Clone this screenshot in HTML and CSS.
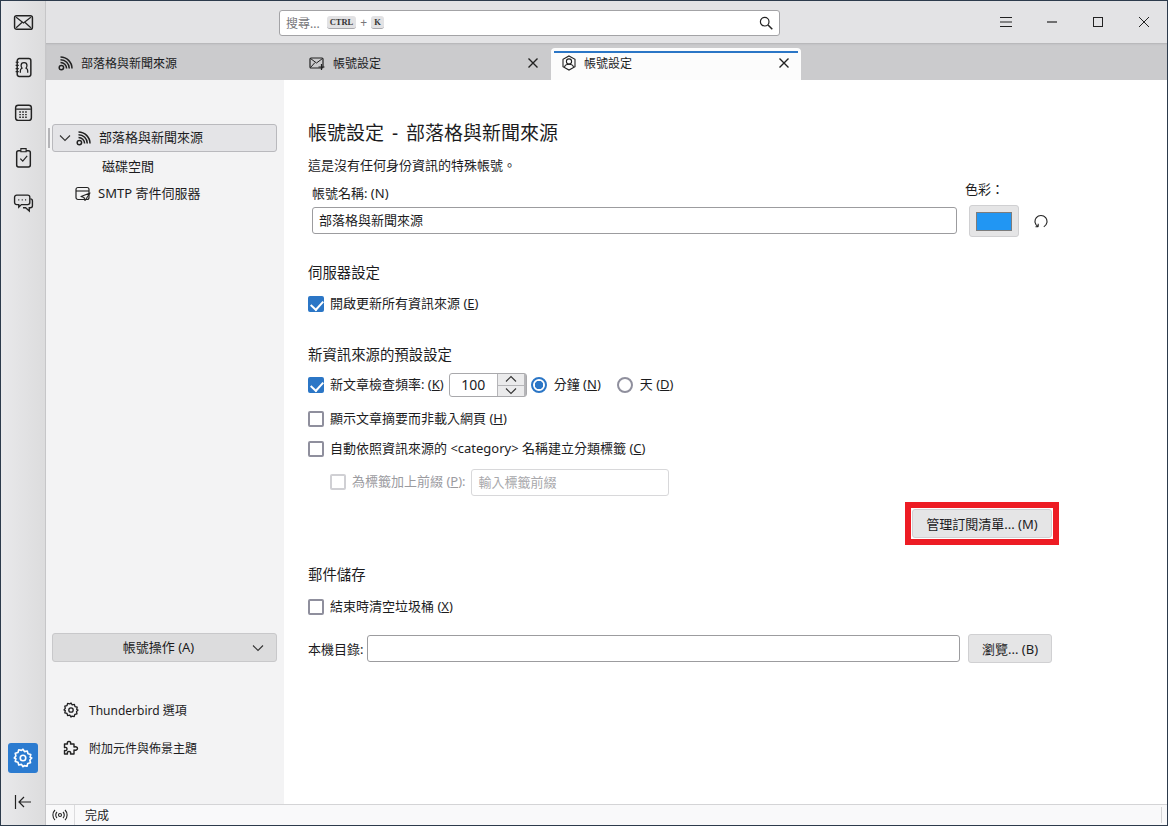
FILE: index.html
```html
<!DOCTYPE html>
<html lang="zh-Hant">
<head>
  <meta charset="UTF-8" />
  <title>帳號設定</title>
  <link rel="stylesheet" href="styles.css">
</head>
<body>
  <svg class="defs" width="0" height="0">
    <symbol id="i-rss" viewBox="0 0 16 16">
      <circle cx="3.4" cy="12.6" r="2.2" fill="none" stroke="#222" stroke-width="1.5"/>
      <g fill="none" stroke="#222" stroke-width="1.5">
        <path d="M2.500 7.400a6.100 6.100 0 0 1 6.100 6.100"/>
        <path d="M2.500 4.700a8.800 8.800 0 0 1 8.800 8.800"/>
        <path d="M2.500 2a11.500 11.500 0 0 1 11.500 11.500"/>
      </g>
    </symbol>
    <symbol id="i-gear" viewBox="0 0 16 16">
      <path d="M8 1l1.2 1.9 2.2-.5.6 2.2 2.2.6-.5 2.2L15 8l-1.5 1.6.5 2.2-2.2.6-.6 2.2-2.2-.5L8 15l-1.2-1.9-2.2.5-.6-2.2-2.2-.6.5-2.2L1 8l1.3-1.6-.5-2.2 2.2-.6.6-2.2 2.2.5z" fill="none" stroke="currentColor" stroke-width="1.3" stroke-linejoin="round"/>
      <circle cx="8" cy="8" r="2.2" fill="none" stroke="currentColor" stroke-width="1.3"/>
    </symbol>
    <symbol id="i-x" viewBox="0 0 12 12">
      <path d="M1.500 1.500l9 9M10.500 1.500l-9 9" stroke="#222" stroke-width="1.4" fill="none"/>
    </symbol>
    <symbol id="i-down" viewBox="0 0 12 8">
      <path d="M1 1.500l5 5 5-5" stroke="#333" stroke-width="1.1" fill="none"/>
    </symbol>
  </svg>

  <div class="app">
    <nav class="rail">
      <div class="rail-top">
        <svg class="rail-ico" viewBox="0 0 20 20"><rect x="1.500" y="3.500" width="17" height="13" rx="2" fill="none" stroke="#222" stroke-width="1.400"/><path d="M3 5l7 5.500L17 5M3 15l5.500-5M17 15l-5.500-5" fill="none" stroke="#222" stroke-width="1.100"/></svg>
        <svg class="rail-ico" viewBox="0 0 20 20"><rect x="4" y="1.500" width="13" height="17" rx="2" fill="none" stroke="#222" stroke-width="1.400"/><path d="M2.500 5h3M2.500 8h3M2.500 11h3M2.500 14h3" stroke="#222" stroke-width="1.100"/><path d="M7 15v-2c0-1.500 1-2 1.600-2.400C7.800 9.500 7.700 8.700 7.700 8c0-1.500 1-2.600 2.800-2.600s2.800 1.100 2.800 2.600c0 .7-.1 1.500-.9 2.600.6.4 1.600.9 1.600 2.400v2" fill="none" stroke="#222" stroke-width="1.200"/></svg>
        <svg class="rail-ico" viewBox="0 0 20 20"><rect x="2.500" y="3" width="15" height="14.500" rx="2.500" fill="none" stroke="#222" stroke-width="1.400"/><path d="M3 6.800h14" stroke="#222" stroke-width="1.200"/><path d="M6 9.500h8M6 12h8M6 14.500h8" stroke="#222" stroke-width="1.300" stroke-dasharray="1.500 1.300"/></svg>
        <svg class="rail-ico" viewBox="0 0 20 20"><rect x="3.500" y="3.500" width="13" height="15.500" rx="1.800" fill="none" stroke="#222" stroke-width="1.400"/><path d="M7.500 1.500h5v3h-5z" fill="#e4e4e4" stroke="#222" stroke-width="1.100"/><path d="M7 11l2.300 2.500L13.500 8.500" fill="none" stroke="#222" stroke-width="1.100"/></svg>
        <svg class="rail-ico" viewBox="0 0 20 20"><path d="M3.500 3h10.500a2 2 0 0 1 2 2v5a2 2 0 0 1-2 2H8l-2.500 2.500V12H3.500a2 2 0 0 1-2-2V5a2 2 0 0 1 2-2z" fill="none" stroke="#222" stroke-width="1.300"/><path d="M16.500 6.500a2 2 0 0 1 2 2V13a2 2 0 0 1-2 2h-1v3l-3.500-3H9.500" fill="none" stroke="#222" stroke-width="1.300"/><path d="M5 7.500h1M8.300 7.500h1M11.500 7.500h1" stroke="#222" stroke-width="1.300"/></svg>
      </div>
      <div class="rail-bottom">
        <div class="rail-settings"><svg class="ico-18"><use href="#i-gear"/></svg></div>
        <svg class="rail-collapse" viewBox="0 0 18 14"><path d="M1.500 0v14M17 7H5M10 2L5 7l5 5" fill="none" stroke="#222" stroke-width="1.200"/></svg>
      </div>
    </nav>

    <div class="main">
      <header class="toolbar">
        <div class="search">
          <span class="search-hint">搜尋...</span>
          <kbd class="key">CTRL</kbd>
          <span class="plus">+</span>
          <kbd class="key">K</kbd>
          <svg class="search-ico" viewBox="0 0 14 14"><circle cx="5.700" cy="5.700" r="4.300" fill="none" stroke="#222" stroke-width="1.200"/><path d="M9 9l4.300 4.300" stroke="#222" stroke-width="1.500"/></svg>
        </div>
        <div class="win-btns">
          <svg class="win-ico" viewBox="0 0 12 12"><path d="M0 1.500h12M0 6h12M0 10.500h12" stroke="#222" stroke-width="1"/></svg>
          <svg class="win-ico" viewBox="0 0 12 12"><path d="M1 6h10" stroke="#222" stroke-width="1.200"/></svg>
          <svg class="win-ico" viewBox="0 0 12 12"><rect x="1.500" y="1.500" width="9" height="9" fill="none" stroke="#222" stroke-width="1"/></svg>
          <svg class="win-ico" viewBox="0 0 12 12"><path d="M1 1l10 10M11 1L1 11" stroke="#222" stroke-width="1"/></svg>
        </div>
      </header>

      <div class="tabbar">
        <div class="tab tab-first">
          <svg class="ico-16"><use href="#i-rss"/></svg>
          <span>部落格與新聞來源</span>
        </div>
        <div class="tab tab-second">
          <svg class="ico-16" viewBox="0 0 16 16"><rect x="1" y="3" width="13" height="10" rx="1" fill="none" stroke="#222" stroke-width="1.200"/><path d="M1.500 3.500L7.500 8l6-4.500M1.500 12.500L6 7.500" fill="none" stroke="#222" stroke-width="1"/><path d="M12.500 9v6M9.500 12h6" stroke="#222" stroke-width="1.200"/></svg>
          <span class="tab-label">帳號設定</span>
          <svg class="tab-close"><use href="#i-x"/></svg>
        </div>
        <div class="tab tab-active">
          <svg class="ico-16" viewBox="0 0 16 16"><path d="M8 1l6 3.300v7.400L8 15l-6-3.300V4.300z" fill="none" stroke="#222" stroke-width="1.100"/><circle cx="8" cy="6.500" r="2.600" fill="none" stroke="#222" stroke-width="1.100"/><path d="M3.500 12c.5-2 2-2.800 4.500-2.800s4 .8 4.500 2.800" fill="none" stroke="#222" stroke-width="1.100"/></svg>
          <span class="tab-label">帳號設定</span>
          <svg class="tab-close"><use href="#i-x"/></svg>
        </div>
      </div>

      <div class="body">
        <aside class="sidebar">
          <div class="tree-row">
            <svg class="tree-arrow"><use href="#i-down"/></svg>
            <svg class="ico-16"><use href="#i-rss"/></svg>
            <span class="txt">部落格與新聞來源</span>
          </div>
          <div class="tree-child">磁碟空間</div>
          <div class="tree-smtp">
            <svg class="ico-16" viewBox="0 0 16 16"><rect x="1" y="1.500" width="13" height="12" rx="2" fill="none" stroke="#222" stroke-width="1.200"/><path d="M1 5h13" stroke="#222" stroke-width="1.100"/><path d="M15 7L6 10.500l3 1 1 3z" fill="#f3f3f3" stroke="#222" stroke-width="1.100" stroke-linejoin="round"/></svg>
            <span class="txt">SMTP 寄件伺服器</span>
          </div>
          <div class="side-spacer"></div>
          <button class="btn action-btn">
            <span>帳號操作 (A)</span>
            <svg class="action-arrow"><use href="#i-down"/></svg>
          </button>
          <div class="side-link side-link-first">
            <svg class="ico-16"><use href="#i-gear"/></svg>
            <span>Thunderbird 選項</span>
          </div>
          <div class="side-link side-link-second">
            <svg class="ico-16" viewBox="0 0 16 16"><path d="M6 1.500c1.500 0 2 1 1.500 2.500H11v3c1.500-.5 3.500 0 3.500 1.500S12.500 10.500 11 10v4H7.500c.5-1.500 0-2.500-1.500-2.500S4 12.500 4.500 14H1.500v-3.500C3 11 4 10.300 4 9S3 7 1.500 7.500V4h3C4 2.500 4.500 1.500 6 1.500z" fill="none" stroke="#222" stroke-width="1.400" stroke-linejoin="round"/></svg>
            <span>附加元件與佈景主題</span>
          </div>
        </aside>

        <main class="content">
          <div class="form">
            <h1 class="title">帳號設定 - 部落格與新聞來源</h1>
            <p class="lead">這是沒有任何身份資訊的特殊帳號。</p>

            <div class="name-row">
              <div class="name-col">
                <label class="name-label">帳號名稱: (N)</label>
                <div class="field">部落格與新聞來源</div>
              </div>
              <div class="color-col">
                <div class="color-label">色彩：</div>
                <div class="color-line">
                  <button class="btn color-btn"><span class="swatch"></span></button>
                  <svg class="reset-ico" viewBox="0 0 14 14"><path d="M4.200 12.800A6 6 0 1 1 9.800 12.800M4.200 12.800V9.800M4.200 12.800H1.500" fill="none" stroke="#222" stroke-width="1.100"/></svg>
                </div>
              </div>
            </div>

            <h2 class="sec sec-server">伺服器設定</h2>
            <div class="row row-a">
              <span class="check on"></span>
              <span class="txt">開啟更新所有資訊來源 (<u>E</u>)</span>
            </div>

            <h2 class="sec sec-feed">新資訊來源的預設設定</h2>
            <div class="row row-spin">
              <span class="check on"></span>
              <span class="txt">新文章檢查頻率: (<u>K</u>)</span>
              <div class="spin">
                <span class="spin-val">100</span>
                <span class="spin-btns">
                  <span class="spin-up"><svg class="spin-arrow up"><use href="#i-down"/></svg></span>
                  <span class="spin-down"><svg class="spin-arrow"><use href="#i-down"/></svg></span>
                </span>
              </div>
              <span class="radio on"></span>
              <span class="txt radio-text">分鐘 (<u>N</u>)</span>
              <span class="radio radio-second"></span>
              <span class="txt radio-text">天 (<u>D</u>)</span>
            </div>
            <div class="row row-b">
              <span class="check"></span>
              <span class="txt">顯示文章摘要而非載入網頁 (<u>H</u>)</span>
            </div>
            <div class="row row-c">
              <span class="check"></span>
              <span class="txt">自動依照資訊來源的 &lt;category&gt; 名稱建立分類標籤 (<u>C</u>)</span>
            </div>
            <div class="row row-prefix">
              <span class="check off"></span>
              <span class="txt muted">為標籤加上前綴 (<u>P</u>):</span>
              <div class="prefix-field">輸入標籤前綴</div>
            </div>

            <div class="manage-wrap">
              <div class="red-frame"><button class="btn manage-btn">管理訂閱清單... (M)</button></div>
            </div>

            <h2 class="sec sec-store">郵件儲存</h2>
            <div class="row row-store">
              <span class="check"></span>
              <span class="txt">結束時清空垃圾桶 (<u>X</u>)</span>
            </div>
            <div class="dir-row">
              <span>本機目錄:</span>
              <div class="field dir-field"></div>
              <button class="btn browse-btn">瀏覽... (B)</button>
            </div>
          </div>
        </main>
      </div>

      <footer class="status">
        <div class="status-ico">
          <svg class="ico-16" viewBox="0 0 16 16"><circle cx="8" cy="8" r="1.500" fill="none" stroke="#222" stroke-width="1.100"/><path d="M5 5a4.200 4.200 0 0 0 0 6M11 5a4.200 4.200 0 0 1 0 6M3 3a7 7 0 0 0 0 10M13 3a7 7 0 0 1 0 10" fill="none" stroke="#222" stroke-width="1.100"/></svg>
        </div>
        <span class="status-text">完成</span>
        <span class="status-end"></span>
      </footer>
    </div>
  </div>
</body>
</html>
```

FILE: styles.css
```css
* {
  box-sizing: border-box;
}
html, body {
  margin: 0;
  height: 100%;
}
body {
  font-family: "Noto Sans", "Noto Sans CJK TC", sans-serif;
  font-size: 13px;
  color: #1c1c1e;
  overflow: hidden;
}
.defs {
  position: absolute;
}
.app {
  display: flex;
  width: 1168px;
  height: 826px;
  border: 1px solid #2d3b4c;
}
.ico-16 {
  width: 16px;
  height: 16px;
  flex-shrink: 0;
}
.ico-18 {
  width: 20px;
  height: 20px;
  color: #fff;
}
/* nudges the CJK glyphs up a pixel next to icons and checkboxes */
.txt {
  line-height: 18px;
  padding-bottom: 2px;
}

/* left rail */
.rail {
  width: 45px;
  flex-shrink: 0;
  display: flex;
  flex-direction: column;
  justify-content: space-between;
  background: linear-gradient(to right, #e9e9eb, #dcdcdd);
  border-right: 1px solid #c6c6c8;
}
.rail-top {
  display: flex;
  flex-direction: column;
  align-items: center;
  padding-top: 11px;
  gap: 24px;
}
.rail-ico {
  width: 21px;
  height: 21px;
}
.rail-bottom {
  display: flex;
  flex-direction: column;
  align-items: center;
  padding-bottom: 16px;
}
.rail-settings {
  width: 30px;
  height: 30px;
  border-radius: 3px;
  background: #2b7bd0;
  display: flex;
  align-items: center;
  justify-content: center;
}
.rail-collapse {
  width: 18px;
  height: 14px;
  margin-top: 22px;
}

.main {
  flex: 1;
  display: flex;
  flex-direction: column;
  min-width: 0;
}

/* toolbar */
.toolbar {
  height: 42px;
  background: #e3e3e5;
  display: flex;
  align-items: center;
  padding-left: 233px;
}
.search {
  width: 501px;
  height: 26px;
  margin-top: 1px;
  background: #fff;
  border: 1px solid #a3a3a6;
  border-radius: 3px;
  display: flex;
  align-items: center;
  padding: 0 6px;
  color: #77777a;
  font-size: 12px;
}
.search-hint {
  margin-right: 7px;
}
.key {
  font-family: "Liberation Serif", serif;
  font-size: 8.5px;
  font-weight: bold;
  color: #333;
  background: #e2e2e4;
  border-bottom: 1px solid #a9a9ad;
  border-radius: 3px;
  padding: 1px 3px;
}
.plus {
  margin: 0 4px;
}
.search-ico {
  width: 14px;
  height: 14px;
  margin-left: auto;
}
.win-btns {
  display: flex;
  margin-left: 220px;
  gap: 34px;
}
.win-ico {
  width: 12px;
  height: 12px;
}

/* tabs */
.tabbar {
  height: 37px;
  display: flex;
  align-items: flex-end;
  background: #cbcbcd;
  box-shadow: inset 0 2px 2px -1px #b3b3b5;
  font-size: 12px;
}
.tab {
  width: 250px;
  height: 37px;
  display: flex;
  align-items: center;
  padding: 2px 11px 0 14px;
  gap: 7px;
  flex-shrink: 0;
}
.tab-first {
  width: 249px;
  padding-left: 12px;
}
.tab-second {
  padding: 2px 6px 0 14px;
  gap: 8px;
}
.tab-label {
  flex: 1;
}
.tab-close {
  width: 12px;
  height: 12px;
}
.tab-active {
  height: 32px;
  margin-left: 6px;
  background: #fcfcfc;
  border-radius: 4px 4px 0 0;
  border-top: 3px solid #fcfcfc;
  position: relative;
  padding: 0 11px 5px 10px;
}
.tab-active::before {
  content: "";
  position: absolute;
  left: 3px;
  right: 3px;
  top: 0;
  height: 2px;
  background: #2b76c6;
}

.body {
  flex: 1;
  display: flex;
  min-height: 0;
}

/* sidebar */
.sidebar {
  width: 238px;
  flex-shrink: 0;
  background: #f3f3f4;
  display: flex;
  flex-direction: column;
  padding: 44px 7px 46px 6px;
  position: relative;
}
.tree-row {
  height: 28px;
  display: flex;
  align-items: center;
  background: #e4e4e7;
  border: 1px solid #b9b9bd;
  border-radius: 3px;
  padding-left: 6px;
  gap: 7px;
}
.tree-row::before {
  content: "";
  position: absolute;
  left: 2px;
  top: 48px;
  width: 2px;
  height: 20px;
  background: #b5b5b8;
}
.tree-arrow {
  width: 12px;
  height: 8px;
  margin-right: -2px;
}
.tree-child {
  line-height: 20px;
  margin: 4px 0 1px 50px;
}
.tree-smtp {
  display: flex;
  align-items: center;
  height: 20px;
  margin: 7px 0 0 23px;
  gap: 7px;
}
.side-spacer {
  flex: 1;
}
.btn {
  font: inherit;
  color: inherit;
  background: #e5e5e6;
  border: 1px solid #d0d0d2;
  border-radius: 3px;
  padding: 0;
}
.action-btn {
  height: 29px;
  position: relative;
  background: #dcdcdd;
  border-color: #c8c8ca;
  text-align: center;
  padding: 0 12px 2px 0;
}
.action-arrow {
  position: absolute;
  right: 12px;
  top: 10px;
  width: 12px;
  height: 8px;
}
.side-link {
  display: flex;
  align-items: center;
  height: 20px;
  padding-left: 11px;
  gap: 10px;
  font-size: 12px;
}
.side-link-first {
  margin-top: 38px;
}
.side-link-second {
  margin-top: 18px;
}

/* content */
.content {
  flex: 1;
  background: #fff;
  padding: 41px 0 0 24px;
}
.form {
  width: 745px;
  display: flex;
  flex-direction: column;
}
.title {
  font-size: 19px;
  font-weight: normal;
  line-height: 24px;
  word-spacing: 3px;
  margin: 0;
}
.lead {
  line-height: 20px;
  margin: 10px 0 0;
}
.name-row {
  display: flex;
  margin-top: 4px;
}
.name-col {
  flex: 1;
  margin: auto 0 3px 4px;
}
.name-label {
  display: block;
  line-height: 20px;
  margin-bottom: 4px;
}
.field {
  height: 27px;
  line-height: 25px;
  border: 1px solid #9c9c9f;
  border-radius: 3px;
  padding: 0 6px;
  background: #fff;
}
.color-col {
  width: 88px;
  margin-left: 8px;
}
.color-label {
  line-height: 20px;
  margin-bottom: 6px;
}
.color-line {
  display: flex;
  align-items: center;
  padding-left: 4px;
}
.color-btn {
  width: 50px;
  height: 32px;
  display: flex;
  align-items: center;
  justify-content: center;
}
.swatch {
  width: 36px;
  height: 19px;
  background: #2196f3;
  border: 1px solid #7c7c7c;
}
.reset-ico {
  width: 14px;
  height: 14px;
  margin-left: 15px;
}
.sec {
  font-size: 14.4px;
  font-weight: normal;
  line-height: 20px;
  margin: 0;
}
.sec-server {
  margin-top: 26px;
}
.sec-feed {
  margin-top: 31px;
}
.sec-store {
  margin-top: 20px;
}
.row {
  display: flex;
  align-items: center;
  min-height: 20px;
  gap: 6px;
}
.row-a {
  margin-top: 11px;
}
.row-store {
  margin-top: 12px;
}
.row-spin {
  margin-top: 8px;
  height: 24px;
}
.row-b {
  margin-top: 12px;
}
.row-c {
  margin-top: 10px;
}
.row-prefix {
  margin-top: 10px;
  padding-left: 22px;
  height: 26px;
}
.check {
  width: 16px;
  height: 16px;
  border: 2px solid #8f8f9d;
  border-radius: 2px;
  flex-shrink: 0;
  background: #fff;
  position: relative;
}
.check.on {
  background: #2b76c6;
  border-color: #2b76c6;
}
.check.on::after {
  content: "";
  position: absolute;
  left: 3px;
  top: 0;
  width: 6px;
  height: 10px;
  border: solid #fff;
  border-width: 0 2px 2px 0;
  transform: rotate(42deg);
}
.check.off {
  border-color: #d0d0d4;
}
.spin {
  width: 78px;
  height: 24px;
  margin: 0 -2px 0 -1px;
  display: flex;
  border: 1px solid #a9a9ac;
  border-radius: 3px;
}
.spin-val {
  flex: 1;
  text-align: center;
  font-size: 14px;
  line-height: 21px;
}
.spin-btns {
  width: 29px;
  display: flex;
  flex-direction: column;
  border-left: 1px solid #b5b5b8;
  border-right: 2px solid #b5b5b8;
}
.spin-up, .spin-down {
  flex: 1;
  background: #ebebec;
  display: flex;
  align-items: center;
  justify-content: center;
}
.spin-up {
  border-bottom: 1px solid #b5b5b8;
}
.spin-arrow {
  width: 12px;
  height: 8px;
}
.spin-arrow.up {
  transform: scaleY(-1);
}
.radio {
  width: 16px;
  height: 16px;
  border: 2px solid #8f8f9d;
  border-radius: 50%;
  flex-shrink: 0;
  background: #fff;
}
.radio.on {
  border: 2px solid #2b76c6;
  background: radial-gradient(circle, #2b76c6 0 4px, #fff 4.500px);
}
.radio-text {
  margin-left: 1px;
}
.radio-second {
  margin-left: 10px;
}
.muted {
  color: #9b9b9f;
}
.prefix-field {
  width: 198px;
  height: 27px;
  line-height: 25px;
  margin-left: -1px;
  padding: 0 7px;
  border: 1px solid #d8d8da;
  border-radius: 3px;
  color: #a8a8ab;
}
.manage-wrap {
  display: flex;
  justify-content: flex-end;
  margin: 7px -6px 0 0;
}
.red-frame {
  border: 6px solid #ed1c24;
  padding: 1px;
  background: #fff;
}
.manage-btn {
  display: block;
  width: 140px;
  height: 29px;
}
.dir-row {
  display: flex;
  align-items: center;
  height: 29px;
  margin: 17px 1px 0 0;
}
.dir-field {
  flex: 1;
  margin-left: 4px;
}
.browse-btn {
  width: 84px;
  height: 29px;
  margin-left: 8px;
}

/* status bar */
.status {
  height: 21px;
  display: flex;
  align-items: center;
  background: #f9f9fa;
  border-top: 1px solid #d4d4d6;
  font-size: 12px;
}
.status-ico {
  width: 29px;
  height: 20px;
  display: flex;
  align-items: center;
  justify-content: center;
  border-right: 1px solid #dcdcde;
}
.status-text {
  margin-left: 10px;
}
.status-end {
  margin-left: auto;
  width: 6px;
  height: 16px;
  border-left: 1px solid #d4d4d6;
}
```
